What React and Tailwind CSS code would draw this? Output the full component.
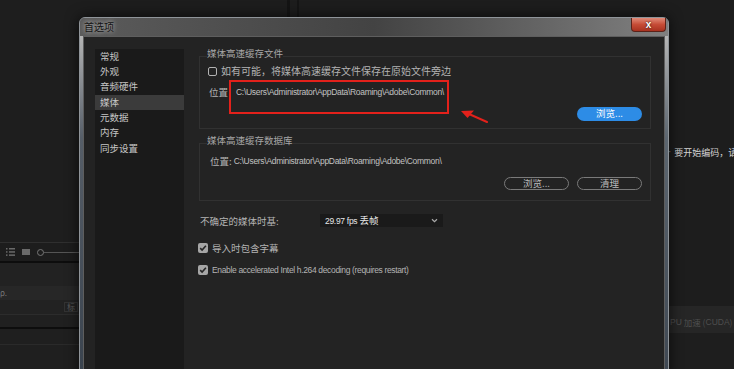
const CJK = "font-['Noto_Sans_CJK_SC',sans-serif]";
const LAT = "font-['Liberation_Sans','Noto_Sans_CJK_SC',sans-serif]";

const NAV = ["常规", "外观", "音频硬件", "媒体", "元数据", "内存", "同步设置"];
const PATH = "C:\\Users\\Administrator\\AppData\\Roaming\\Adobe\\Common\\";

function Check({ on }) {
  if (!on) return <span className="h-[9px] w-[9px] shrink-0 rounded-[2px] border-[1.5px] border-[#b3b3b3]" />;
  return (
    <span className="flex h-[10px] w-[10px] shrink-0 items-center justify-center rounded-[2px] bg-[#a6a6a6]">
      <svg width="8" height="8" viewBox="0 0 8 8">
        <path d="M1.2 4.1 3.1 6 6.9 1.7" fill="none" stroke="#262626" strokeWidth="1.6" />
      </svg>
    </span>
  );
}

function Pill({ children, blue }) {
  return blue ? (
    <button className="flex h-[14px] w-[65px] items-center justify-center rounded-full bg-[#2d8ce6] text-[9.5px] leading-none text-white">
      {children}
    </button>
  ) : (
    <button className="flex h-[13px] w-[65px] items-center justify-center rounded-full border-[1.5px] border-[#7a7a7a] text-[9.5px] leading-none text-[#bdbdbd]">
      {children}
    </button>
  );
}

export default function App() {
  return (
    <div className={`relative h-[369px] w-[734px] overflow-hidden bg-[#1d1d1d] ${CJK}`}>
      {/* background app */}
      <div className="flex h-full">
        <div className="flex w-[80px] flex-col">
          <div className="h-[243px] border-b border-[#2f2f2f] bg-[#1e1e1e]" />
          <div className="flex h-[18px] items-center gap-[7px] pl-[6px]">
            <svg width="9" height="8" viewBox="0 0 9 8" fill="#6a6a6a">
              <rect x="0" y="0" width="1.5" height="1.5" /><rect x="3" y="0" width="6" height="1.5" />
              <rect x="0" y="3.2" width="1.5" height="1.5" /><rect x="3" y="3.2" width="6" height="1.5" />
              <rect x="0" y="6.4" width="1.5" height="1.5" /><rect x="3" y="6.4" width="6" height="1.5" />
            </svg>
            <span className="h-[6px] w-[8px] bg-[#6a6a6a]" />
            <div className="flex flex-1 items-center">
              <span className="h-[7px] w-[7px] rounded-full border-[1.5px] border-[#777]" />
              <span className="h-px flex-1 bg-[#555]" />
            </div>
          </div>
          <div className="h-[2px] bg-[#0d0d0d]" />
          <div className="h-[23px] bg-[#222]" />
          <div className="flex h-[14px] items-center bg-[#272727] text-[8px] leading-none text-[#777]">ρ.</div>
          <div className="flex h-[15px] items-center justify-end border-b border-[#2c2c2c] bg-[#222] pr-[2px] text-[8px] leading-none text-[#5a5a5a]">
            <span className="border border-[#333] px-[2px]">标</span>
          </div>
          <div className="h-[12px] bg-[#202020]" />
          <div className="h-[2px] bg-[#0d0d0d]" />
          <div className="h-[16px] border-b border-[#2a2a2a] bg-[#1f1f1f]" />
          <div className="flex-1 bg-[#1f1f1f]" />
        </div>
        <div className="flex flex-1">
          <div className="w-[207px]" />
          <div className="w-[3px] bg-[#141414]" />
          <div className="w-[7px]" />
          <div className="w-[2px] bg-[#151515]" />
          <div className="flex-1" />
        </div>
        <div className="flex w-[66px] flex-col">
          <div className="h-[145px]" />
          <div className="flex h-[14px] items-center overflow-hidden whitespace-nowrap text-[9px] leading-none text-[#d4d4d4]">
            <span className={`${LAT} mr-[3px] text-[10px] text-[#888]`}>·</span>要开始编码，请
          </div>
          <div className="h-[147px]" />
          <div className="flex h-[27px] items-center overflow-hidden bg-[#262626] pl-[2px] pt-[6px] whitespace-nowrap text-[8.5px] leading-none text-[#4e4e4e]">
            <span className={LAT}>PU</span>&nbsp;加速 (<span className={LAT}>CUDA</span>)
          </div>
          <div className="flex-1 bg-[#1e1e1e]" />
        </div>
      </div>

      {/* dialog window */}
      <div className="absolute left-[79px] top-[17px] flex h-[360px] w-[590px] flex-col rounded-t-[6px] border border-[#8f9499] bg-[#4d4f52] shadow-[0_0_14px_rgba(0,0,0,0.7)]">
        <div className="relative flex h-[18px] items-center rounded-t-[5px] bg-linear-to-r from-[#5b5b5b] via-[#434343] to-[#808080] pl-[4px]">
          <span className="text-[10px] leading-none text-[#141414] [text-shadow:0_0_5px_rgba(255,255,255,0.75)]">首选项</span>
          <div className="absolute right-[2px] top-0 flex h-[14px] w-[35px] items-center justify-center rounded-b-[4px] border border-t-0 border-[#5b2219] bg-linear-to-b from-[#e08a78] via-[#c64c36] to-[#a83220]">
            <span className={`${LAT} text-[10px] font-bold leading-none text-white [text-shadow:0_0_2px_#000]`}>x</span>
          </div>
        </div>
        <div className="flex flex-1">
          <div className="w-[3px] bg-linear-to-b from-[#b5b5b5] via-[#565e68] via-30% to-[#3a434e]" />
          <div className="flex flex-1 gap-[15px] border border-[#5e5e5e] bg-[#232323] pl-[11px] pt-[10px]">
            {/* nav list */}
            <div className="mt-[2px] w-[89px] bg-[#1a1a1a]">
              {NAV.map((n) => (
                <div
                  key={n}
                  className={`flex h-[15.3px] items-center pl-[5px] text-[9.5px] leading-none text-[#c6c6c6] ${n === "媒体" ? "bg-[#3b3b3b]" : ""}`}
                >
                  {n}
                </div>
              ))}
            </div>

            {/* settings */}
            <div className="flex w-[452px] flex-col text-[9.5px] leading-[12px] text-[#b3b3b3]">
              <fieldset className="border border-[#313131] pb-[7px] pl-[8px] pr-[8px]">
                <legend className="-ml-px pb-[6px] text-[#a6a6a6]">媒体高速缓存文件</legend>
                <div className="flex h-[12px] items-center gap-[4px]">
                  <Check />
                  <span className="text-[10px]">如有可能，将媒体高速缓存文件保存在原始文件旁边</span>
                </div>
                <div className="mt-[9px] flex h-[12px] items-center gap-[8px] pl-px">
                  <span>位置</span>
                  <span className={`${LAT} text-[8.5px] tracking-[-0.3px] text-[#c2c2c2]`}>{PATH}</span>
                </div>
                <div className="mt-[9px] flex justify-end">
                  <Pill blue>浏览...</Pill>
                </div>
              </fieldset>

              <fieldset className="mt-[5px] border border-[#313131] pb-[10px] pl-[8px] pr-[8px]">
                <legend className="-ml-px pb-[6px] text-[#a6a6a6]">媒体高速缓存数据库</legend>
                <div className="mt-[3px] flex h-[12px] items-center gap-[2px] pl-[2px]">
                  <span>位置:</span>
                  <span className={`${LAT} text-[8.5px] tracking-[-0.3px] text-[#c2c2c2]`}>{PATH}</span>
                </div>
                <div className="mt-[10px] flex justify-end gap-[8px]">
                  <Pill>浏览...</Pill>
                  <Pill>清理</Pill>
                </div>
              </fieldset>

              <div className="mt-[13px] flex h-[13px] items-center pl-px">
                <span className="w-[120px]">不确定的媒体时基:</span>
                <div className="flex h-[13px] w-[123px] items-center justify-between bg-[#1a1a1a] pl-[5px] pr-[5px] text-[#e6e6e6]">
                  <span>
                    <span className={`${LAT} text-[8.5px] tracking-[-0.3px]`}>29.97 fps</span> 丢帧
                  </span>
                  <svg width="7" height="5" viewBox="0 0 7 5">
                    <path d="M1 1.2 3.5 3.6 6 1.2" fill="none" stroke="#aaa" strokeWidth="1.2" />
                  </svg>
                </div>
              </div>

              <div className="mt-[16px] flex h-[10px] items-center gap-[4px] -ml-px">
                <Check on />
                <span>导入时包含字幕</span>
              </div>
              <div className="mt-[12px] flex h-[10px] items-center gap-[4px] -ml-px">
                <Check on />
                <span className={`${LAT} text-[8.5px] tracking-[-0.35px]`}>
                  Enable accelerated Intel h.264 decoding (requires restart)
                </span>
              </div>
            </div>
          </div>
          <div className="w-[3px] bg-linear-to-b from-[#b5b5b5] via-[#5c6670] via-30% to-[#3e4752]" />
        </div>
      </div>

      {/* annotation */}
      <div className="absolute left-[229px] top-[80px] h-[34px] w-[220px] border-2 border-[#e3211b]" />
      <svg className="absolute left-[458px] top-[106px]" width="32" height="20" viewBox="0 0 32 20">
        <polygon points="3,5 16,4.5 9.5,12" fill="#e3211b" />
        <line x1="11" y1="8" x2="29" y2="16" stroke="#e3211b" strokeWidth="2" strokeLinecap="round" />
      </svg>
    </div>
  );
}
